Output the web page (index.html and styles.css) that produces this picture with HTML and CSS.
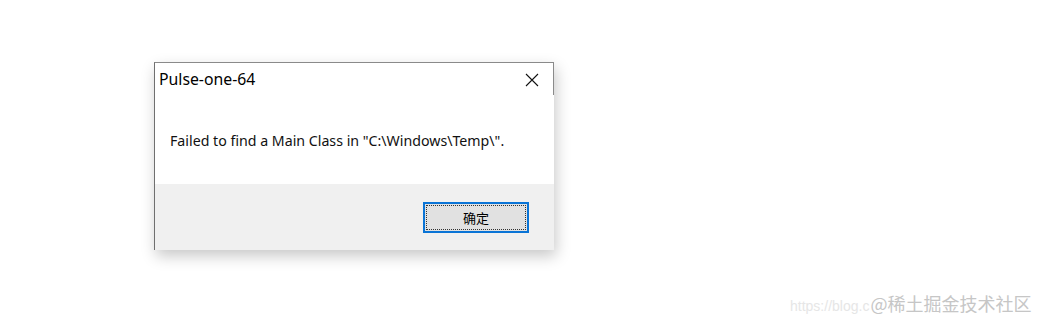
FILE: index.html
```html
<!DOCTYPE html>
<html lang="zh-CN">
<head>
    <meta charset="UTF-8">
    <meta name="viewport" content="width=device-width, initial-scale=1.0">
    <title>Pulse-one-64</title>
    <link rel="stylesheet" href="styles.css">
</head>
<body>

    <div class="dialog">
        <div class="title-bar">
            <span class="title">Pulse-one-64</span>
            <button class="close" aria-label="Close">
                <svg width="14" height="14" viewBox="0 0 14 14">
                    <path d="M1 1 L13 13 M13 1 L1 13" stroke="#111" stroke-width="1.1" fill="none"/>
                </svg>
            </button>
        </div>

        <div class="message">
            Failed to find a Main Class in "C:\Windows\Temp\".
        </div>

        <div class="footer">
            <button class="ok"><span>确定</span></button>
        </div>
    </div>

    <!-- Watermark -->
    <div class="watermark">
        <span class="url">https://blog.c</span><span class="brand">@稀土掘金技术社区</span>
    </div>

</body>
</html>
```

FILE: styles.css
```css
* {
    box-sizing: border-box;
    margin: 0;
    padding: 0;
}

html, body {
    width: 1043px;
    height: 321px;
    background: #fff;
    overflow: hidden;
}

body {
    position: relative;
    font-family: "Noto Sans", "Open Sans", sans-serif;
    padding: 62px 0 0 154px;
}

.dialog {
    width: 400px;
    height: 188px;
    display: flex;
    flex-direction: column;
    background: #fff;
    border-left: 1px solid #6f6f6f;
    border-top: 1px solid #8a8a8a;
    box-shadow: 2px 6px 14px rgba(0, 0, 0, 0.22);
}

.title-bar {
    height: 32px;
    display: flex;
    align-items: center;
    justify-content: space-between;
    padding-left: 4px;
    border-right: 1px solid #8a8a8a;
}

.title {
    font-size: 15.8px;
    color: #000;
}

.close {
    width: 46px;
    height: 32px;
    border: none;
    background: transparent;
    display: flex;
    align-items: center;
    justify-content: center;
    margin-right: -1px;
    padding-left: 2px;
    padding-top: 2px;
}

.message {
    flex: 1;
    display: flex;
    align-items: center;
    padding-left: 15px;
    padding-top: 1px;
    font-size: 14.2px;
    color: #111;
}

.footer {
    height: 66px;
    background: #f0f0f0;
    display: flex;
    justify-content: flex-end;
    align-items: flex-start;
    padding: 18px 25px 0 0;
}

.ok {
    width: 106px;
    height: 31px;
    border: 2px solid #0a74d6;
    background: #e1e1e1;
    padding: 1px;
    font-family: "Noto Sans CJK SC", sans-serif;
    font-size: 13px;
    color: #000;
}

.ok span {
    display: flex;
    align-items: center;
    justify-content: center;
    width: 100%;
    height: 100%;
    border: 1px dotted #333;
}

/* Watermark */
.watermark {
    position: absolute;
    left: 790px;
    top: 290px;
    font-size: 14px;
    white-space: nowrap;
    font-family: "Liberation Sans", sans-serif;
}

.watermark .url {
    color: #e6e6e6;
}

.watermark .brand {
    font-family: "Noto Sans CJK SC", sans-serif;
    font-size: 18px;
    color: #c6c6c6;
    margin-left: 1px;
}
```
